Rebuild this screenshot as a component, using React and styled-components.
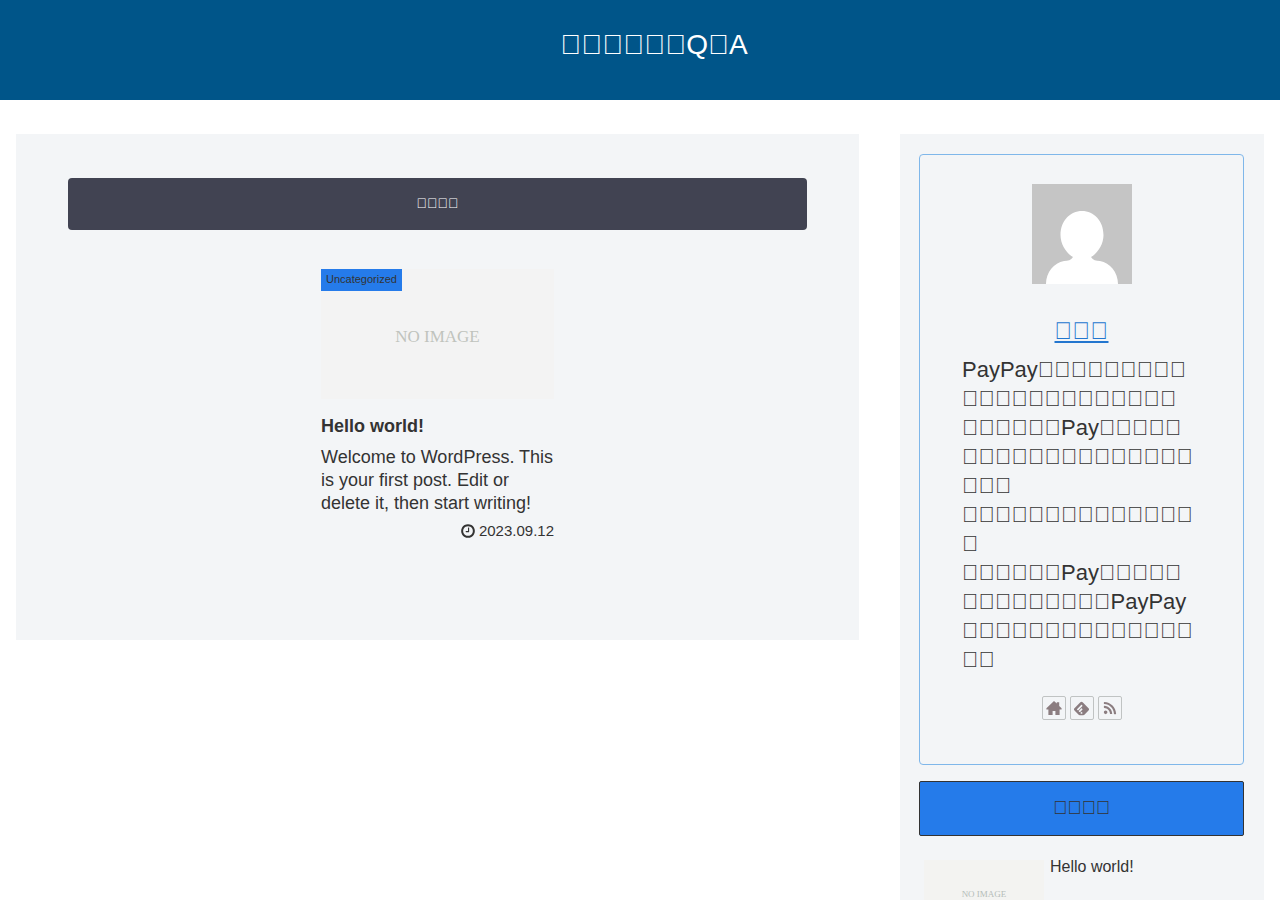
import React from "react";
import styled, { createGlobalStyle } from "styled-components";
import { SiFeedly } from "react-icons/si";
import { FaRss } from "react-icons/fa";

// a code point without a glyph, drawn as an empty box
const box = (count) => "\uE8FF".repeat(count);

const profileLines = [
  `PayPay${box(9)}`,
  box(13),
  `${box(6)}Pay${box(5)}`,
  box(14),
  box(3),
  box(14),
  box(1),
  `${box(6)}Pay${box(5)}`,
  `${box(9)}PayPay`,
  box(14),
  box(2),
];

const HomeIcon = ({ size }) => (
  <svg width={size} height={size} viewBox="0 0 16 16" fill="currentColor" aria-hidden="true">
    <path d="M8 1 .4 8.2v1.2h2V15h4.2v-4h2.8v4h4.2V9.4h2V8.2l-2.4-2.3V2.2h-2.4v1.4z" />
  </svg>
);

const followLinks = [
  { label: "Website", Icon: HomeIcon, size: 16 },
  { label: "feedly", Icon: SiFeedly, size: 15 },
  { label: "RSS", Icon: FaRss, size: 14 },
];

const ClockIcon = () => (
  <svg width="14" height="16" viewBox="0 0 1536 1792" fill="currentColor" aria-hidden="true">
    <path d="M896 544v448q0 14-9 23t-23 9h-320q-14 0-23-9t-9-23v-64q0-14 9-23t23-9h224v-352q0-14 9-23t23-9h64q14 0 23 9t9 23zm416 352q0-148-73-273t-198-198-273-73-273 73-198 198-73 273 73 273 198 198 273 73 273-73 198-198 73-273zm224 0q0 209-103 385.5t-279.5 279.5-385.5 103-385.5-103-279.5-279.5-103-385.5 103-385.5 279.5-279.5 385.5-103 385.5 103 279.5 279.5 103 385.5z" />
  </svg>
);

const Avatar = () => (
  <svg width="100" height="100" viewBox="0 0 100 100" role="img" aria-label="avatar">
    <rect width="100" height="100" fill="#c5c5c5" />
    <path
      d="M50 27c12 0 21.500 10 21.500 24 0 9-5.500 18-12.500 22 2 3 5 4 9 4 10 2 18 11 18 23H14c0-12 8-21 18-23 4 0 7-1 9-4-7-4-12.500-13-12.500-22 0-14 9.500-24 21.500-24z"
      fill="#fff"
    />
  </svg>
);

const App = () => {
  return (
    <>
      <GlobalStyle />
      <Header>
        <SiteTitle>
          <a href="#top">{`${box(6)}Q${box(1)}A`}</a>
        </SiteTitle>
      </Header>
      <Content>
        <Main>
          <TabButton type="button">{box(4)}</TabButton>
          <EntryCard href="#hello-world">
            <EntryThumb>
              NO IMAGE
              <Category>Uncategorized</Category>
            </EntryThumb>
            <EntryTitle>Hello world!</EntryTitle>
            <Snippet>
              Welcome to WordPress. This is your first post. Edit or delete it, then start writing!
            </Snippet>
            <PostDate>
              <ClockIcon />
              <time dateTime="2023-09-12">2023.09.12</time>
            </PostDate>
          </EntryCard>
        </Main>
        <Sidebar>
          <Profile>
            <Avatar />
            <AuthorName href="#author">{box(3)}</AuthorName>
            <Description>
              {profileLines.map((line, i) => (
                <React.Fragment key={i}>
                  {line}
                  <br />
                </React.Fragment>
              ))}
            </Description>
            <FollowList>
              {followLinks.map(({ label, Icon, size }) => (
                <FollowLink href={`#${label}`} aria-label={label} key={label}>
                  <Icon size={size} />
                </FollowLink>
              ))}
            </FollowList>
          </Profile>
          <WidgetTitle>{box(4)}</WidgetTitle>
          <RecentEntry href="#hello-world">
            <RecentThumb>NO IMAGE</RecentThumb>
            <span>Hello world!</span>
          </RecentEntry>
        </Sidebar>
      </Content>
    </>
  );
};

export default App;

const GlobalStyle = createGlobalStyle`
  * {
    box-sizing: border-box;
  }

  body {
    margin: 0;
    background: #fff;
    color: #333;
    font-family: "Liberation Sans", Arial, sans-serif;
    font-size: 18px;
  }

  a {
    color: inherit;
    text-decoration: none;
  }
`;

const Header = styled.header`
  min-height: 100px;
  padding: 29px 0 0 28px;
  background: #005589;
  color: #fff;
  text-align: center;
`;

const SiteTitle = styled.h1`
  margin: 0;
  font-size: 28px;
  font-weight: 400;
  line-height: 32px;
`;

const Content = styled.div`
  display: flex;
  align-items: flex-start;
  gap: 41px;
  padding: 34px 16px;

  @media (max-width: 900px) {
    flex-direction: column;
    align-items: stretch;
  }
`;

const Main = styled.main`
  flex: 1;
  display: flex;
  flex-direction: column;
  align-items: center;
  padding: 44px 52px 98px;
  background: #f3f5f7;
`;

const TabButton = styled.button`
  width: 100%;
  height: 52px;
  padding: 0 0 2px;
  border: 0;
  border-radius: 4px;
  background: #414352;
  color: #fff;
  font-family: inherit;
  font-size: 14px;
  cursor: pointer;
`;

const EntryCard = styled.a`
  display: block;
  width: 100%;
  max-width: 233px;
  margin-top: 39px;
`;

const EntryThumb = styled.div`
  position: relative;
  display: flex;
  align-items: center;
  justify-content: center;
  height: 130px;
  padding-top: 5px;
  background: #f3f3f3;
  color: #c0c3bd;
  font-family: "Liberation Serif", serif;
  font-size: 17px;
`;

const Category = styled.span`
  position: absolute;
  top: 0;
  left: 0;
  padding: 0 5px 1px;
  background: #257bea;
  color: #333;
  font-family: "Liberation Sans", Arial, sans-serif;
  font-size: 11px;
  line-height: 21px;
`;

const EntryTitle = styled.h2`
  margin: 16px 0 8px;
  font-size: 18px;
  line-height: 23px;
`;

const Snippet = styled.p`
  margin: 0;
  line-height: 23px;
`;

const PostDate = styled.div`
  display: flex;
  align-items: center;
  justify-content: flex-end;
  gap: 4px;
  margin-top: 4px;
  font-size: 15px;
  line-height: 23px;
`;

const Sidebar = styled.aside`
  flex: 0 0 364px;
  padding: 20px 20px 20px 19px;
  background: #f3f5f7;
`;

const Profile = styled.section`
  display: flex;
  flex-direction: column;
  align-items: center;
  padding: 29px 42px 44px;
  border: 1px solid #7fb7ea;
  border-radius: 4px;
`;

const AuthorName = styled.a`
  margin-top: 32px;
  color: #2376cf;
  font-size: 24px;
  line-height: 29px;
  text-decoration: underline;
`;

const Description = styled.p`
  align-self: stretch;
  margin: 10px 0 22px;
  font-size: 22px;
  line-height: 29px;
`;

const FollowList = styled.div`
  display: flex;
  gap: 4px;
`;

const FollowLink = styled.a`
  display: flex;
  align-items: center;
  justify-content: center;
  width: 24px;
  height: 24px;
  border: 1px solid #c0c3c3;
  border-radius: 2px;
  color: #8b7d80;
`;

const WidgetTitle = styled.h3`
  margin: 16px 0 19px;
  padding-bottom: 2px;
  border: 1px solid #333;
  border-radius: 2px;
  background: #257bea;
  font-size: 19px;
  font-weight: 400;
  line-height: 51px;
  text-align: center;
`;

const RecentEntry = styled.a`
  display: flex;
  gap: 6px;
  padding: 0 5px;
  font-size: 16px;
  line-height: 23px;
`;

const RecentThumb = styled.div`
  display: flex;
  align-items: center;
  justify-content: center;
  width: 120px;
  height: 68px;
  margin-top: 5px;
  background: #f3f3f1;
  color: #b5bdb9;
  font-family: "Liberation Serif", serif;
  font-size: 9px;
`;
